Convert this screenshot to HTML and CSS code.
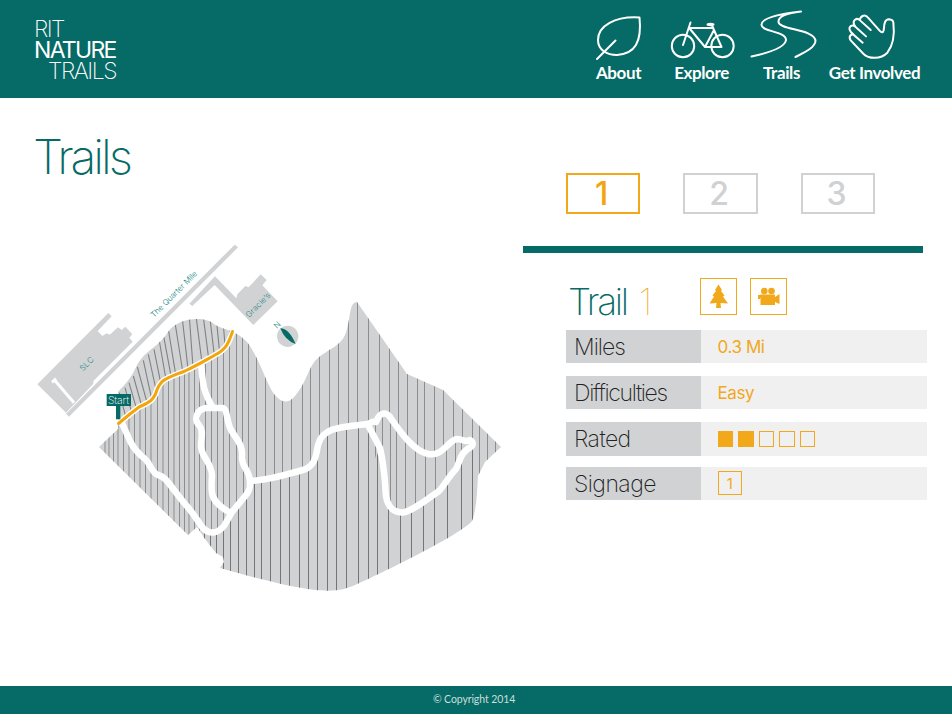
FILE: index.html
```html
<!DOCTYPE html>
<html lang="en">
<head>
<meta charset="utf-8">
<title>RIT Nature Trails</title>
<link rel="stylesheet" href="styles.css">
</head>
<body>
<header class="header">
  <a class="logo"><span class="l1">RIT</span><span class="l2">NATURE</span><span class="l3">TRAILS</span></a>
  <nav class="nav">
    <a class="item about"><svg width="60" height="62" viewBox="590 4 60 62"><path d="M639.500 17.500C615 16 598 26 598 40C598 50 607 55 617 55C635 54 642 42 639.500 17.500ZM597 59L615.500 40.500"/></svg><span>About</span></a>
    <a class="item explore"><svg width="68" height="62" viewBox="668 4 68 62"><circle cx="683" cy="46" r="11.200"/><circle cx="722.500" cy="46" r="11.200"/><path d="M683 45L690.500 22.500M689 28H713M690 29L705 47H721.500L712 25.500M714 30L705 47"/><ellipse class="fill" cx="710.500" cy="24.500" rx="4" ry="1.700"/></svg><span>Explore</span></a>
    <a class="item trails"><svg width="70" height="62" viewBox="748 4 70 62"><path d="M801 11.500C779 14 761 18 761.500 25C762 32 786 31 786 40C785 48 768 53 751.500 56.500M801 11.500C788 13 778 16 778.500 22C779 30 815 29 815.500 41C815 48 803 53 795.500 57"/></svg><span>Trails</span></a>
    <a class="item involved"><svg width="60" height="62" viewBox="844 4 60 62"><path class="hand" transform="translate(839.700 7.700) scale(.33333)" d="M158 45C162 80 160 110 140 135C120 155 85 155 68 138L30 98C22 86 32 75 42 84L66 105M42 84L30 72C20 58 34 48 44 57L76 86M44 57L41 52C34 38 48 28 58 38L90 67M57 37C60 22 75 20 82 30L116 68Q126 80 129 68C131 50 130 36 145 35C157 36 158 45 158 45"/></svg><span>Get Involved</span></a>
  </nav>
</header>
<main class="main">
  <section class="left">
    <h1>Trails</h1>
    <svg class="map" width="480" height="360" viewBox="30 240 480 360">
      <defs>
        <clipPath id="land"><path d="M99 446L118 428V391C125 383 131 378 137 364C144 350 160 345 168 331C178 316 205 315 214 323C222 329 235 328 247 341C259 356 265 380 274 393Q285 407 295 395C307 381 309 364 318 357C331 346 343 345 347 328C351 314 349 302 357 301L407 373L443 389L501 446L485 461L478 475C477 490 477 507 472 520C462 533 380 573 355 584C335 593 315 594 220 567L224 561L223 556L216 552L205 538L197 526L188 534Z"/></clipPath>
        <clipPath id="slope"><path d="M100 300H236L233 330C226 352 200 362 168 377C156 382 158 397 139 406L118 423H100Z"/></clipPath>
        <clipPath id="west"><path d="M90 450L118 423L139 406C158 397 156 382 168 377C200 362 226 352 233 330L238 325V455L251 480L249 492L232 511L218 531H210L198 535L180 545Z"/></clipPath>
        <clipPath id="north"><path d="M238 290H510V480H472V440L460 438L442 450L432 454L408 440L385 413L367 423L326 430L313 460L290 472L250 480L238 455Z"/></clipPath>
        <clipPath id="south"><path d="M198 530H212L218 531L232 511L250 480L290 472L313 460L326 430L367 423L385 475L389 502L403 513L439 490L472 442L510 470V600H190Z"/></clipPath>
        <clipPath id="loop"><path d="M367 423L385 413L408 440L432 454L460 438L472 443L439 490L403 513L387 500Z"/></clipPath>
      </defs>
      <g clip-path="url(#land)">
        <rect class="ground" x="90" y="290" width="420" height="310"/>
        <g clip-path="url(#slope)" class="rows slant"><path transform="translate(30 240) scale(.33333)" d="M268 455l24 90M285 440l24 90M297 425l26 90M310 405l28 100M322 378l30 110M340 358l26 120M355 340l24 110M372 325l20 100M388 300l19 110M400 280l24 130M415 265l22 135M435 245l23 145M457 233l17 150M478 228l11 150M498 225l18 140M520 228l16 125M540 233l13 110M560 245l9 90M580 252l6 70M598 258l6 45"/></g>
        <g clip-path="url(#west)" class="rows"><path d="M105 380v160M109 380v160M113.500 380v160M118 380v160M123.500 380v160M129 380v160M134.500 380v160M140 380v160M145.500 350v195M151 350v195M157.500 350v195M163 350v195M168.500 350v195M174 350v195M179.500 350v195M184.500 350v195M189 340v205M194.500 340v205M199.500 340v205M205.500 340v205M211.500 340v205M217.500 330v215M223.500 330v215M229.500 330v215M236.500 320v215M243.500 320v195"/></g>
        <g clip-path="url(#north)" class="rows"><path d="M242.500 300v200M248.500 300v200M256.500 300v200M265.500 300v200M274.500 300v200M282.500 300v200M291.500 300v200M302.500 300v200M310.500 300v200M319.500 300v200M329.500 300v200M338.500 300v200M348.500 300v200M357.500 300v200M368.500 300v200M379.500 300v200M389.500 300v200M398.500 300v200M407.500 300v200M417.500 300v200M424.500 300v200M434.500 300v200M443.500 300v200M453.500 300v200M462.500 300v200M472.500 300v200M479.500 300v200M487.500 300v200M495.500 300v200"/></g>
        <g clip-path="url(#south)" class="rows dark"><path d="M204.500 400v200M210.500 400v200M216.500 400v200M223.500 400v200M230.500 400v200M238.500 400v200M246.500 400v200M254.500 400v200M261.500 400v200M270.500 400v200M280.500 400v200M289.500 400v200M299.500 400v200M308.500 400v200M317.500 400v200M327.500 400v200M336.500 400v200M346.500 400v200M358.500 400v200M368.500 400v200M377.500 400v200M388.500 400v200M400.500 400v200M411.500 400v200M423.500 400v200M434.500 400v200M447.500 400v200M461.500 400v200M472.500 400v200"/></g>
        <g clip-path="url(#loop)" class="rows"><path d="M375.500 400v120M382.500 400v120M390.500 400v120M396.500 400v120M405.500 400v120M415.500 400v120M425.500 400v120M435.500 400v120M446.500 400v120M455.500 400v120M461.500 400v120"/></g>
      </g>
      <g class="path">
        <path d="M122 422L130 440Q135 450 145 458C151 463 151 471 158 474C166 476 168 482 185 503C196 515 199 523 204 528C211 534 218 532 224 525L232 511L246 494C250 490 251 482 249 475C247 467 241 464 242 455C243 444 237 439 231 429C226 420 228 407 222 407H208C196 407 194 419 199 424C204 430 201 437 201 444C200 455 212 461 212 475C211 490 209 500 229 511M201 362C203 382 202 388 213 407M250 480C278 478 290 472 303 469C316 465 316 453 318 444C322 427 339 426 367 423C371 423 372 419 376 421C380 410 387 410 392 419C401 432 414 450 428 453C443 456 447 440 457 438C464 438 464 442 470 439Q475 442 471 446C460 451 460 461 456 468C449 475 444 485 439 490C425 500 412 510 403 511.500C391 512 386 502 385.500 490C385 475 382 455 380 447L368 424" stroke-width="6.500"/>
        <path d="M118 423L130 413L139 406C151 401 153 398 155.500 393C160 378 165 378 185 370C196 365 206 359 215 354C228 347 229 340 233 330" stroke-width="6"/>
      </g>
      <path class="active" d="M118.500 422.500L130 413L139 406C151 401 153 398 155.500 393C160 378 165 378 185 370C196 365 206 359 215 354C228 347 229 340 232.500 330.500"/>
      <g transform="translate(30 240) scale(.33333)">
        <path class="ground" d="M108 518L117 527L624 19L614 11ZM22 430L235 216L245 226L203 270L217 285L230 277L239 281L264 259L275 267L286 257L307 280L298 290L308 302L190 420V428L108 515ZM478 188L555 106L619 172L622 160L646 135L656 139L692 100L710 117L697 133L743 181L670 252L554 132L487 195Z"/>
        <path class="path" d="M66 424L78 413M76 420L132 485" stroke-width="9"/>
        <circle class="ground" cx="773" cy="286" r="32"/>
        <path class="teal" d="M751 262Q777 263 797 309Q765 299 751 262ZM230 459H303V495H271V535H258V495H230Z"/>
      </g>
      <text class="maptext" transform="translate(154 317) rotate(-45)" textLength="62">The Quarter Mile</text>
      <text class="maptext" transform="translate(83 370.500) rotate(-45)" textLength="16">SLC</text>
      <text class="maptext" transform="translate(249 317) rotate(-45)" textLength="31">Gracie’s</text>
      <text class="maptext" transform="translate(277 328) rotate(-45)">N</text>
      <text class="start" x="108" y="403" textLength="21">Start</text>
    </svg>
  </section>
  <section class="right">
    <div class="tabs"><a class="tab on">1</a><a class="tab">2</a><a class="tab">3</a></div>
    <div class="bar"></div>
    <div class="title">
      <h2>Trail <em>1</em></h2>
      <span class="box"><svg width="35" height="35" viewBox="701 279 35 35"><path d="M718.500 284.500L722 290L721 291L724.500 295.500L723 296.500L728 303.500L720.500 303L721 308H716L716.500 303L709.500 303.500L714 296.500L712.500 295.500L716 291L715 290Z"/></svg></span>
      <span class="box"><svg width="35" height="35" viewBox="751 279 35 35"><circle cx="764.300" cy="291" r="3.300"/><circle cx="771.500" cy="291" r="3.300"/><path d="M760.500 294.500H775V297L779.500 294V304L775 302V305H760.500ZM758 295H760.500V299H758Z"/></svg></span>
    </div>
    <dl class="facts">
      <div class="row"><dt class="miles">Miles</dt><dd>0.3 Mi</dd></div>
      <div class="row"><dt class="diff">Difficulties</dt><dd>Easy</dd></div>
      <div class="row"><dt>Rated</dt><dd class="stars"><i class="full"></i><i class="full"></i><i></i><i></i><i></i></dd></div>
      <div class="row last"><dt>Signage</dt><dd><span class="sign">1</span></dd></div>
    </dl>
  </section>
</main>
<footer class="footer">© Copyright 2014</footer>
</body>
</html>
```
FILE: styles.css
```css
* { box-sizing: border-box; }
body { margin: 0; width: 952px; height: 714px; display: flex; flex-direction: column; background: #fff; font-family: Inter, "Liberation Sans", sans-serif; overflow: hidden; }
.header { height: 98px; flex: none; background: #066a66; color: #fff; display: flex; justify-content: space-between; }
.logo { width: 82px; margin: 19px 0 0 34px; font-size: 23px; line-height: 21px; font-weight: 200; display: flex; flex-direction: column; }
.logo span { white-space: nowrap; }
.l1 { letter-spacing: -1.600px; }
.l2 { font-weight: 400; letter-spacing: -1.700px; }
.l3 { margin-left: 14px; letter-spacing: -1.500px; }
.nav { display: flex; margin-right: 28px; padding-top: 4px; }
.item { display: flex; flex-direction: column; align-items: center; font: 700 17px/22px Lato, sans-serif; white-space: nowrap; letter-spacing: -.4px; }
.item span { margin: -4px 3px 0 0; }
.item svg { fill: none; stroke: #fff; stroke-width: 2; stroke-linecap: round; stroke-linejoin: round; }
.item svg .hand { stroke-width: 6; }
.item svg .fill { fill: #fff; stroke: none; }
.about { width: 60px; margin-right: 18px; }
.explore { width: 68px; margin-right: 12px; }
.explore span { margin-right: 1px; }
.trails { width: 70px; margin-right: 8px; }
.involved { width: 98px; }
.involved span { margin-right: 1px; }
.main { flex: 1; display: flex; }
.left { width: 523px; padding: 31px 0 0 30px; }
h1 { margin: 0 0 0 3px; height: 111.500px; font-size: 48px; line-height: 56px; font-weight: 200; letter-spacing: -3.100px; color: #066a66; }
.map { display: block; }
.ground { fill: #d1d2d4; }
.rows { fill: none; stroke: #8b8d90; stroke-width: 1; }
.slant { stroke-width: 3.300; stroke: #808285; }
.rows.dark { stroke: #737578; }
.path { fill: none; stroke: #fff; stroke-linejoin: round; }
.active { fill: none; stroke: #f2a50c; stroke-width: 3; stroke-linecap: round; }
.teal { fill: #066a66; }
.maptext { font-size: 8px; font-weight: 300; fill: #248883; }
.start { font-size: 10.500px; font-weight: 200; fill: #fff; }
.right { width: 405px; padding-top: 75px; }
.tabs { display: flex; gap: 43px; margin-left: 43px; }
.tab { width: 74.400px; height: 41px; border: 2px solid #cfd1d2; color: #cfd1d2; display: flex; justify-content: center; align-items: center; padding: 0 3px 1px 0; font-size: 32px; font-weight: 500; }
.tab.on { border-color: #f1a81b; color: #f1a50f; }
.bar { width: 400px; height: 7px; margin-top: 32px; background: #066a66; }
.title { display: flex; height: 77px; padding: 25px 0 0 46px; }
h2 { margin: 3px 0 0 -1px; width: 132px; font-size: 37px; line-height: 42px; font-weight: 200; letter-spacing: -2.300px; color: #066a66; white-space: pre; }
em { font-style: normal; font-weight: 100; color: #f1a81b; margin-left: 4px; }
.box { width: 37px; height: 37px; border: 1.500px solid #f1a81b; margin-right: 13px; display: flex; }
.box svg { fill: #f1a81b; flex: none; }
.facts { margin: 0 0 0 43px; display: flex; flex-direction: column; gap: 13px; }
.row { display: flex; width: 361px; height: 33.200px; background: #f0f0f1; }
.last { margin-top: -2px; }
dt { width: 135px; padding-left: 8px; background: #d1d2d4; font-size: 23px; line-height: 34px; font-weight: 200; color: #222; letter-spacing: -.550px; }
.miles { letter-spacing: -1px; }
.diff { letter-spacing: -1.350px; }
dd { margin: 0; padding-left: 16.500px; font-size: 17px; letter-spacing: -.4px; color: #f1a81b; display: flex; align-items: center; }
.stars { gap: 5px; }
.stars i { width: 15.500px; height: 15.500px; border: 1px solid #f1a81b; }
.stars .full { background: #f1a81b; }
.sign { width: 24px; height: 24px; border: 1px solid #f1a81b; text-align: center; line-height: 23px; font-size: 15px; }
.footer { height: 28px; flex: none; background: #066a66; color: #c8dfdd; font: 10.500px/27px Lato, sans-serif; letter-spacing: -.1px; text-align: center; padding-right: 4px; }
```
